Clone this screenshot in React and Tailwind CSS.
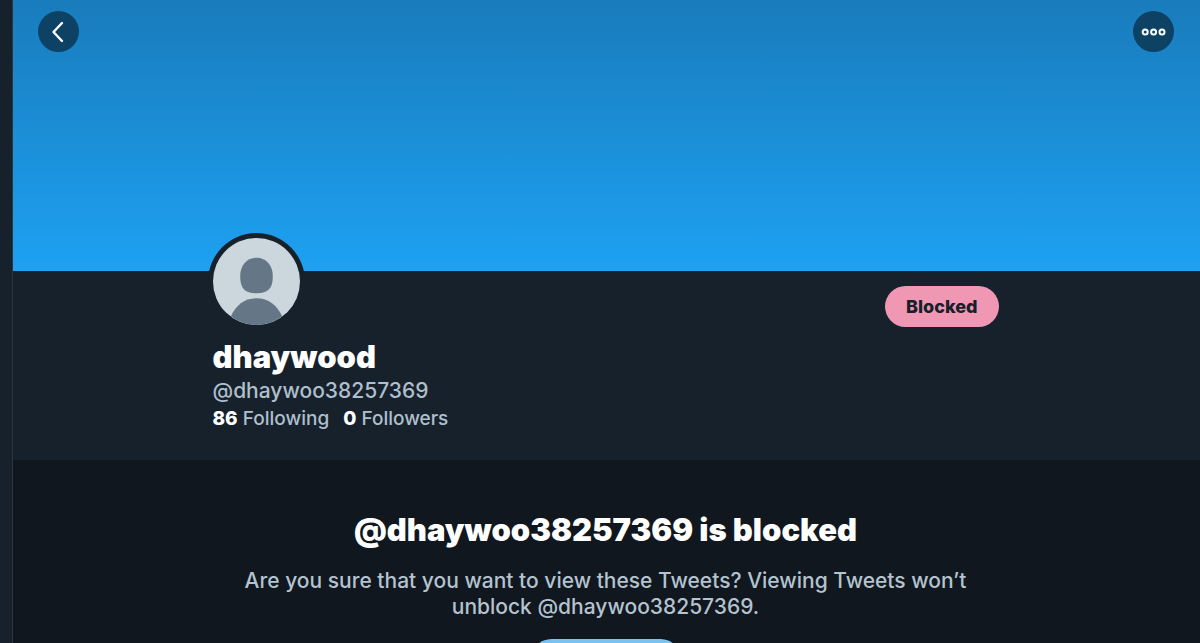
import React from "react";

const profile = {
  name: "dhaywood",
  handle: "@dhaywoo38257369",
  following: 86,
  followers: 0,
};

const DefaultAvatar = () => (
  <svg viewBox="0 0 88 88" className="size-full" aria-hidden="true">
    <circle cx="44" cy="44" r="44" fill="#ccd6dd" />
    <path
      d="M44 20C54 20 60.5 28 60.5 38.5C60.5 51 56 56 44 56C32 56 27.5 51 27.5 38.5C27.5 28 34 20 44 20Z"
      fill="#657786"
    />
    <path
      d="M18 79.5C23 68 32 61 44 61C56 61 65 68 70 79.5A44 44 0 0 1 18 79.5Z"
      fill="#657786"
    />
  </svg>
);

const Banner = () => (
  <header className="flex h-[271px] items-start justify-between bg-linear-to-b from-[#197cbc] to-[#1da1f2] pt-[11px] pr-[26px] pl-[25px]">
    <button
      type="button"
      aria-label="Back"
      className="flex size-[41px] items-center justify-center rounded-full bg-[#0e4265]">
      <svg viewBox="0 0 41 41" className="size-full" fill="none" aria-hidden="true">
        <path d="M24 12L15.5 21L24 30" stroke="#fff" strokeWidth="2.4" strokeLinecap="round" strokeLinejoin="round" />
      </svg>
    </button>
    <button
      type="button"
      aria-label="More"
      className="flex size-[41px] items-center justify-center rounded-full bg-[#0e4265]">
      <svg viewBox="0 0 41 41" className="size-full" fill="none" stroke="#fff" strokeWidth="2" aria-hidden="true">
        <circle cx="12.2" cy="21" r="2.5" />
        <circle cx="20.6" cy="21" r="2.5" />
        <circle cx="29" cy="21" r="2.5" />
      </svg>
    </button>
  </header>
);

const ProfileInfo = () => (
  <section className="h-[189px] bg-[#17212b]">
    <div className="mx-auto flex max-w-[788px] items-start justify-between pr-0.5">
      <div>
        <div className="-mt-[38px] -ml-[5px] size-[97px] rounded-full bg-[#17212b] p-[5px]">
          <DefaultAvatar />
        </div>
        <h1 className="mt-[11px] text-[31px] leading-8 font-black text-white">{profile.name}</h1>
        <p className="mt-1 text-[21px] leading-7 font-medium text-[#aebfcd]">{profile.handle}</p>
        <p className="flex gap-[14px] text-[19px] leading-7 font-medium text-[#aebfcd]">
          <a href="#following"><strong className="font-extrabold text-white">{profile.following}</strong> Following</a>
          <a href="#followers"><strong className="font-extrabold text-white">{profile.followers}</strong> Followers</a>
        </p>
      </div>
      <button
        type="button"
        className="mt-[15px] h-[41px] rounded-full bg-[#f097b4] px-[21px] text-lg font-extrabold text-[#17202a]">
        Blocked
      </button>
    </div>
  </section>
);

const BlockedNotice = () => (
  <section className="flex flex-col items-center pt-[54px] pr-[26px] pl-6 text-center">
    <h2 className="text-[31px] leading-8 font-black text-white">{`${profile.handle} is blocked`}</h2>
    <p className="mt-[22px] max-w-[760px] text-[21px] leading-[26px] font-medium text-[#b4c3cf]">
      {`Are you sure that you want to view these Tweets? Viewing Tweets won’t unblock ${profile.handle}.`}
    </p>
    <button
      type="button"
      aria-label="View Tweets"
      className="mt-[19px] h-[41px] w-[150px] rounded-full bg-[#79c2f2]"
    />
  </section>
);

const App = () => {
  return (
    <div className="h-screen overflow-hidden bg-[#17212b] pl-3 font-['Inter',sans-serif]">
      <main className="min-h-full border-l border-[#2c3640] bg-[#10171e]">
        <Banner />
        <ProfileInfo />
        <BlockedNotice />
      </main>
    </div>
  );
};

export default App;
